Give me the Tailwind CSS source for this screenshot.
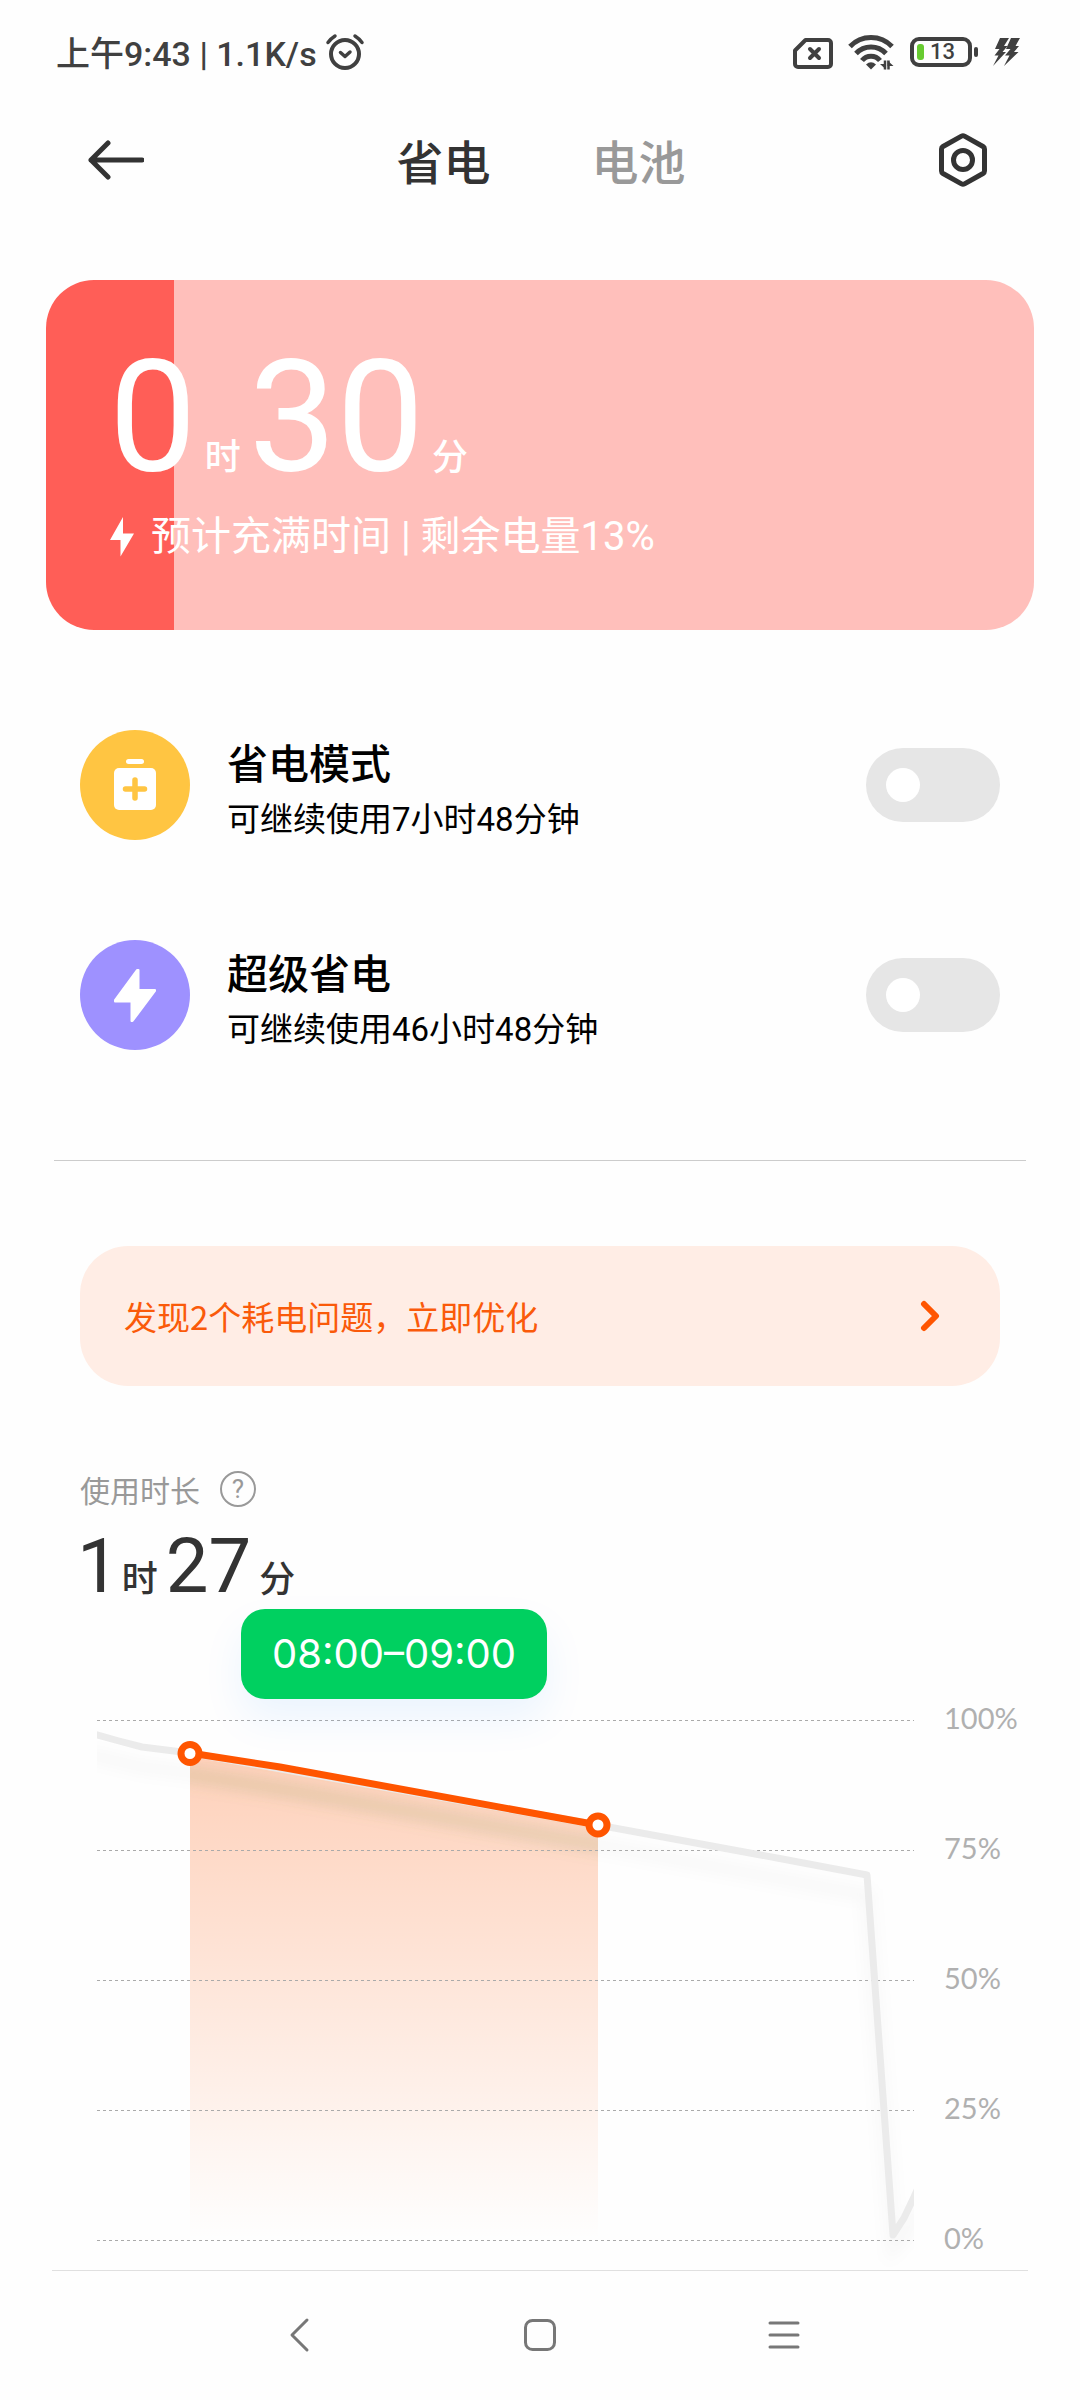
<!DOCTYPE html>
<html lang="zh-CN">
<head>
  <meta charset="UTF-8" />
  <meta name="viewport" content="width=device-width, initial-scale=1.0"/>
  <title>省电与电池</title>
  <script src="https://cdn.jsdelivr.net/npm/@tailwindcss/browser@4"></script>
</head>
<body class="min-h-screen bg-[#fefefe] text-[#333] font-['Noto_Sans_CJK_SC',sans-serif]">

  <!-- Status bar -->
  <div class="flex h-[104px] items-center justify-between pl-14 pr-[58px] text-[#404040] font-['Roboto','Noto_Sans_CJK_SC',sans-serif]">
    <div class="flex items-center gap-2">
      <span class="pt-1 text-[34px] leading-10 font-medium">上午9:43 | 1.1K/s</span>
      <svg class="h-10 w-10" viewBox="0 0 40 40" fill="none" stroke="currentColor" stroke-width="4" stroke-linecap="round" stroke-linejoin="round">
        <circle cx="20" cy="22" r="14"/>
        <path d="M15.500 20.500l4.500 4 5-4.500" stroke-width="3.500"/>
        <path d="M3 10.500Q6 6.500 10 4M37 10.500Q34 6.500 30 4" stroke-width="3.500"/>
      </svg>
    </div>
    <div class="flex items-center">
      <!-- No SIM -->
      <svg class="h-9 w-10" viewBox="0 0 40 36" fill="none" stroke="currentColor" stroke-width="4" stroke-linejoin="round" stroke-linecap="round">
        <path d="M12.500 6H35a3 3 0 0 1 3 3V30a3 3 0 0 1-3 3H5a3 3 0 0 1-3-3V16.500z"/>
        <path d="M17 15l9 9M26 15l-9 9"/>
      </svg>
      <!-- Wi-Fi -->
      <svg class="ml-[15px] h-9 w-12" viewBox="0 0 48 36" fill="none" stroke="currentColor" stroke-width="5">
        <path d="M2 12.500A29 29 0 0 1 44 12.500"/>
        <path d="M8 19.500A20.500 20.500 0 0 1 38 19.500"/>
        <path d="M14 26.500A11.500 11.500 0 0 1 32 26.500"/>
        <path d="M18 30.500Q23 26 28 30.500L23 35.500z" fill="currentColor" stroke="none"/>
        <path d="M37 26.500v9M40.500 35.500v-9" stroke-width="2.500"/>
        <path d="M32 30h6v5.500zM45.500 32h-6v-5.500z" fill="currentColor" stroke="none"/>
      </svg>
      <!-- Battery -->
      <div class="ml-[14px] flex items-center gap-0.5">
        <div class="flex h-[30px] w-[62px] items-center gap-1.5 rounded-[9px] border-4 border-[#404040] pl-[3px]">
          <div class="h-4 w-[7px] rounded-[3px] bg-[#67cb30]"></div>
          <span class="text-[22px] leading-5 font-medium">13</span>
        </div>
        <div class="h-[10px] w-1 rounded-full bg-[#404040]"></div>
      </div>
      <svg class="ml-[14px] h-9 w-[30px]" viewBox="0 0 30 36" fill="currentColor">
        <path d="M8 4h9l-5 8h3.500l-5 6H14L1 32l5.500-10.500H2.500L7.500 15H3z"/>
        <path d="M19 4h9l-4.500 8H27l-5 6h4.500L12 32l5.500-10.500H13L18.500 15H14z"/>
      </svg>
    </div>
  </div>

  <!-- App bar -->
  <header class="flex h-28 items-center justify-between pl-[88px] pr-[92px]">
    <button type="button" aria-label="返回">
      <svg class="h-10 w-14" viewBox="0 0 56 40" fill="none" stroke="#333" stroke-width="5" stroke-linecap="round" stroke-linejoin="round">
        <path d="M20 3L3 20l17 17M3 20h51"/>
      </svg>
    </button>
    <nav class="flex gap-[101px] text-[47px] leading-[58px] font-medium">
      <button type="button">省电</button>
      <button type="button" class="text-[#999]">电池</button>
    </nav>
    <button type="button" aria-label="设置">
      <svg class="h-14 w-[50px]" viewBox="0 0 50 56" fill="none" stroke="#333" stroke-width="5" stroke-linejoin="round">
        <path d="M23.500 4.100Q25 3.300 26.500 4.100L45 14.500Q46.500 15.400 46.500 17V39Q46.500 40.600 45 41.500L26.500 51.900Q25 52.700 23.500 51.900L5 41.500Q3.500 40.600 3.500 39V17Q3.500 15.400 5 14.500z"/>
        <circle cx="25" cy="28" r="9.500"/>
      </svg>
    </button>
  </header>

  <main>
    <!-- Charge card -->
    <section class="mx-[46px] mt-16 rounded-[48px] bg-linear-to-r from-[#ff5e57] from-13% to-[#ffbfbb] to-13% pt-[57px] pb-[69px] pl-[63px] text-white font-['Roboto','Noto_Sans_CJK_SC',sans-serif]">
      <div class="flex items-baseline gap-2">
        <span class="text-[156px] leading-[160px]">0</span>
        <span class="text-4xl leading-none font-medium">时</span>
        <span class="text-[156px] leading-[160px]">30</span>
        <span class="text-4xl leading-none font-medium">分</span>
      </div>
      <div class="mt-4 flex h-12 items-center gap-4">
        <svg class="h-10 w-[26px]" viewBox="0 0 26 40" fill="currentColor">
          <path d="M14 0V16.500H25L11.500 39.500V23H1z"/>
        </svg>
        <p class="text-[40px] leading-[48px]">预计充满时间 | 剩余电量13%</p>
      </div>
    </section>

    <!-- Power saving modes -->
    <ul class="mx-20 mt-[100px] space-y-[100px] text-black">
      <li class="flex h-[110px] items-center">
        <div class="flex size-[110px] items-center justify-center rounded-full bg-[#ffc542]">
          <svg class="h-16 w-12" viewBox="0 0 48 64" fill="#fff">
            <rect x="15" y="6" width="18" height="5" rx="2.500"/>
            <rect x="3" y="15" width="42" height="42" rx="5"/>
            <path d="M24 27v18M14.500 36h19" stroke="#ffc542" stroke-width="5.500" stroke-linecap="round"/>
          </svg>
        </div>
        <label for="saver" class="ml-[37px] flex-1 pt-2">
          <span class="block text-[41px] leading-[60px] font-medium">省电模式</span>
          <span class="mt-0.5 block text-[33px] leading-[54px] font-['Roboto','Noto_Sans_CJK_SC',sans-serif]">可继续使用7小时48分钟</span>
        </label>
        <input id="saver" type="checkbox" role="switch" class="h-[74px] w-[134px] appearance-none rounded-full bg-[#e6e6e6] p-5 before:block before:size-[34px] before:rounded-full before:bg-white checked:bg-[#0d84ff] checked:pl-20"/>
      </li>
      <li class="flex h-[110px] items-center">
        <div class="flex size-[110px] items-center justify-center rounded-full bg-[#9e91ff]">
          <svg class="h-16 w-12" viewBox="0 0 48 64" fill="#fff" stroke="#fff" stroke-width="2" stroke-linejoin="round">
            <path d="M27.500 7V27H44V28L21.500 58H20.500V38.500H4V37L26 7z"/>
          </svg>
        </div>
        <label for="ultra-saver" class="ml-[37px] flex-1 pt-2">
          <span class="block text-[41px] leading-[60px] font-medium">超级省电</span>
          <span class="mt-0.5 block text-[33px] leading-[54px] font-['Roboto','Noto_Sans_CJK_SC',sans-serif]">可继续使用46小时48分钟</span>
        </label>
        <input id="ultra-saver" type="checkbox" role="switch" class="h-[74px] w-[134px] appearance-none rounded-full bg-[#e6e6e6] p-5 before:block before:size-[34px] before:rounded-full before:bg-white checked:bg-[#0d84ff] checked:pl-20"/>
      </li>
    </ul>

    <hr class="mx-[54px] mt-[110px] border-[#ccc]"/>

    <!-- Issues banner -->
    <a href="#" class="mx-20 mt-[85px] flex h-[140px] items-center justify-between rounded-[48px] bg-[#ffede5] pl-11 pr-[58px] text-[#fa5a0a]">
      <span class="text-[33px] leading-[50px]">发现2个耗电问题，立即优化</span>
      <svg class="h-8 w-6" viewBox="0 0 24 32" fill="none" stroke="#ff5500" stroke-width="6" stroke-linecap="round" stroke-linejoin="round">
        <path d="M6 4l12 12L6 28"/>
      </svg>
    </a>

    <!-- Usage time -->
    <section class="mt-[83px]">
      <div class="flex h-10 items-center gap-5 pl-20 text-[#999]">
        <h2 class="text-[30px] leading-10">使用时长</h2>
        <button type="button" aria-label="说明" class="flex size-9 items-center justify-center rounded-full border-2 border-[#999] text-[26px] leading-none font-['Roboto',sans-serif]">?</button>
      </div>
      <div class="mt-[17px] flex items-baseline gap-2 pl-[77px] font-['Roboto','Noto_Sans_CJK_SC',sans-serif]">
        <div class="flex items-baseline gap-0.5">
          <span class="text-[76px] leading-[80px]">1</span>
          <span class="text-4xl leading-none font-medium">时</span>
        </div>
        <div class="flex items-baseline gap-2">
          <span class="text-[76px] leading-[80px]">27</span>
          <span class="text-4xl leading-none font-medium">分</span>
        </div>
      </div>

      <!-- Battery level chart -->
      <div class="relative mt-[92px] ml-[97px] flex gap-[30px]">
        <svg class="min-w-0 flex-1 overflow-visible" viewBox="0 0 817 560" fill="none">
          <defs>
            <linearGradient id="area" x1="0" y1="55" x2="0" y2="542" gradientUnits="userSpaceOnUse">
              <stop offset="0" stop-color="#ff5500" stop-opacity="0.270"/>
              <stop offset="1" stop-color="#ff5500" stop-opacity="0"/>
            </linearGradient>
            <filter id="soft" x="-10%" y="-10%" width="120%" height="130%">
              <feGaussianBlur stdDeviation="7"/>
            </filter>
            <clipPath id="plot"><rect x="0" y="0" width="817" height="570"/></clipPath>
            <clipPath id="selected"><rect x="93" y="0" width="408" height="560"/></clipPath>
          </defs>
          <path d="M93 55L183 71L501 127V542H93z" fill="url(#area)"/>
          <g clip-path="url(#plot)">
            <path d="M-10 56L45 69L93 75L501 147L770 197L796 550L809 536L822 510" stroke="#000" stroke-opacity="0.022" stroke-width="14" filter="url(#soft)"/>
          </g>
          <g clip-path="url(#selected)">
            <path d="M60 72L183 91L530 152" stroke="#8aa050" stroke-opacity="0.140" stroke-width="16" filter="url(#soft)"/>
          </g>
          <path d="M0 22.500H817M0 152.500H817M0 282.500H817M0 412.500H817M0 542.500H817" stroke="#aaa" stroke-dasharray="3 3"/>
          <g clip-path="url(#plot)">
            <path d="M-10 34L22 43L45 49L93 55L501 127L680 160L770 177L796 537L807 520L817 499L821 490" stroke="#ebebeb" stroke-width="7" stroke-linejoin="round"/>
          </g>
          <path d="M93 55L183 69L501 127" stroke="#ff5500" stroke-width="7"/>
          <circle cx="93" cy="55.500" r="9" fill="#fff" stroke="#ff5500" stroke-width="7"/>
          <circle cx="501" cy="127" r="9" fill="#fff" stroke="#ff5500" stroke-width="7"/>
        </svg>
        <div class="flex w-[136px] flex-col justify-between text-[29px] leading-10 text-[#b0b0b0] font-['Lato','Noto_Sans_CJK_SC',sans-serif]">
          <span>100%</span>
          <span>75%</span>
          <span>50%</span>
          <span>25%</span>
          <span>0%</span>
        </div>
        <div class="absolute -top-[89px] left-36 rounded-3xl bg-[#00d060] px-[31px] text-[40px] leading-[90px] text-white shadow-[0_20px_40px_rgba(0,130,255,0.08)] font-['Inter',sans-serif]">08:00–09:00</div>
      </div>
    </section>
  </main>

  <!-- Navigation bar -->
  <hr class="mx-[52px] mt-3 border-[#e0e0e0]"/>
  <nav class="flex h-32 items-center justify-between px-[25%]">
    <button type="button" aria-label="后退">
      <svg class="size-14" viewBox="0 0 56 56" fill="none" stroke="#777" stroke-width="3" stroke-linecap="round" stroke-linejoin="round">
        <path d="M37 13L22 28l15 15"/>
      </svg>
    </button>
    <button type="button" aria-label="主页">
      <svg class="size-14" viewBox="0 0 56 56" fill="none" stroke="#777" stroke-width="3">
        <rect x="13.500" y="13.500" width="29" height="29" rx="7"/>
      </svg>
    </button>
    <button type="button" aria-label="最近任务">
      <svg class="size-14" viewBox="0 0 56 56" fill="none" stroke="#777" stroke-width="3" stroke-linecap="round">
        <path d="M16 16h28M16 28h28M16 40h28"/>
      </svg>
    </button>
  </nav>

</body>
</html>
